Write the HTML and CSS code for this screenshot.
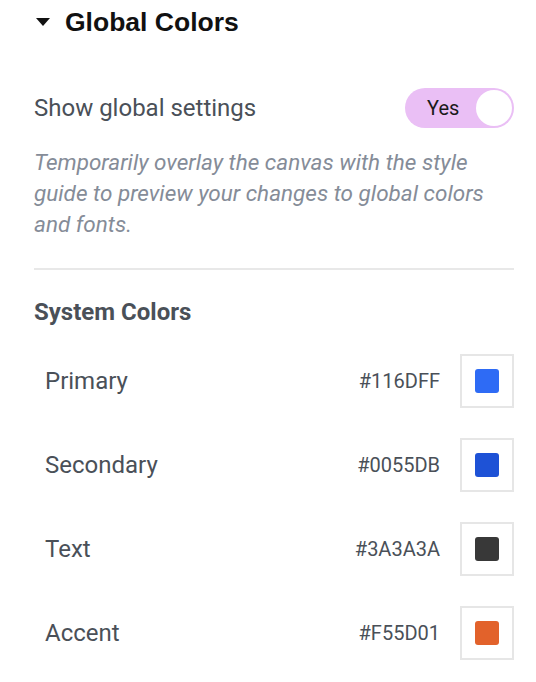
FILE: index.html
```html
<!DOCTYPE html>
<html>
<head>
<meta charset="utf-8">
<link rel="stylesheet" href="styles.css">
</head>
<body>
<div class="panel">
  <div class="heading">
    <svg class="caret" width="14" height="8" viewBox="0 0 14 8"><path d="M0 0H14L7 8Z" fill="#111"/></svg>
    <h2>Global Colors</h2>
  </div>
  <div class="setting">
    <span class="setting-label">Show global settings</span>
    <div class="toggle"><span class="toggle-text">Yes</span><span class="knob"></span></div>
  </div>
  <p class="desc">Temporarily overlay the canvas with the style guide to preview your changes to global colors and fonts.</p>
  <hr class="divider">
  <h3 class="sub">System Colors</h3>
  <div class="rows">
    <div class="row"><span class="name">Primary</span><span class="hex">#116DFF</span><span class="swatch"><span class="chip" style="background:#2e6bf5"></span></span></div>
    <div class="row"><span class="name">Secondary</span><span class="hex">#0055DB</span><span class="swatch"><span class="chip" style="background:#1e52d6"></span></span></div>
    <div class="row"><span class="name">Text</span><span class="hex">#3A3A3A</span><span class="swatch"><span class="chip" style="background:#383838"></span></span></div>
    <div class="row"><span class="name">Accent</span><span class="hex">#F55D01</span><span class="swatch"><span class="chip" style="background:#e2622b"></span></span></div>
  </div>
</div>
</body>
</html>
```
FILE: styles.css
```css
html, body { margin: 0; padding: 0; background: #fff; }
body { font-family: Roboto, "Liberation Sans", sans-serif; }
.panel { width: 480px; padding: 0 22px 0 34px; }
.heading { display: flex; align-items: center; height: 44px; }
.caret { margin-left: 2px; margin-right: 15px; }
.heading h2 { margin: 0; font-family: "Liberation Sans", Arial, sans-serif; font-weight: 700; font-size: 26.5px; color: #111; }
.setting { display: flex; align-items: center; justify-content: space-between; margin-top: 44px; height: 40px; }
.setting-label { font-size: 24px; color: #4a5058; }
.toggle { width: 109px; height: 40px; box-sizing: border-box; background: #eabff5; border-radius: 20px; display: flex; align-items: center; justify-content: space-between; padding: 0 2px 0 22px; }
.toggle-text { font-size: 20px; color: #1a1a1a; }
.knob { width: 36px; height: 36px; border-radius: 50%; background: #fff; }
.desc { margin: 19px 0 0 0; font-style: italic; font-size: 22.5px; line-height: 31px; color: #858c98; }
.divider { border: 0; border-top: 2px solid #e8e8e8; margin: 28px 0 0 0; }
.sub { margin: 28px 0 0 0; font-size: 24px; font-weight: 700; color: #4a5058; line-height: 28px; }
.rows { margin-top: 28px; display: flex; flex-direction: column; gap: 30px; }
.row { display: flex; align-items: center; height: 54px; padding-left: 11px; }
.name { flex: 1; font-size: 24px; color: #4a5058; }
.hex { font-size: 20px; color: #4a5058; margin-right: 20px; }
.swatch { width: 54px; height: 54px; box-sizing: border-box; border: 2px solid #e6e6e6; display: flex; align-items: center; justify-content: center; }
.chip { width: 24px; height: 24px; border-radius: 3px; }
```
